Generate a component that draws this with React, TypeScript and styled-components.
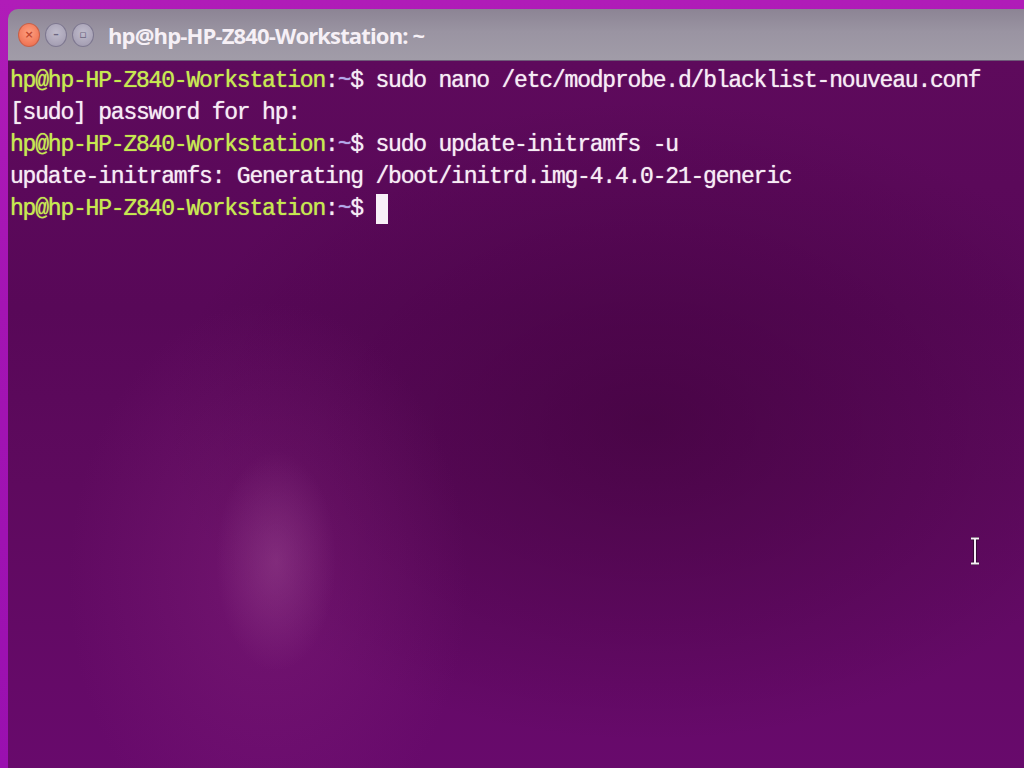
import React from 'react';
import styled, { createGlobalStyle } from 'styled-components';

const GlobalStyle = createGlobalStyle`
  html, body {
    margin: 0;
    padding: 0;
    height: 100%;
    overflow: hidden;
  }
  #root {
    height: 100%;
  }
`;

const Desktop = styled.div`
  height: 100vh;
  display: flex;
  flex-direction: column;
  padding: 9px 0 0 8px;
  box-sizing: border-box;
  background: linear-gradient(180deg, #b01cb8 0%, #a414b4 40%, #9a10b0 100%);
`;

const Window = styled.div`
  flex: 1;
  display: flex;
  flex-direction: column;
  border-top-left-radius: 10px;
  overflow: hidden;
  position: relative;
`;

const TitleBar = styled.div`
  height: 51px;
  display: flex;
  align-items: center;
  gap: 5px;
  padding-left: 10px;
  background: linear-gradient(180deg, #8c8494 0%, #9a94a2 45%, #a19ca8 100%);
  border-bottom: 1px solid #6e5a78;
`;

const WinButton = styled.span<{ $close?: boolean }>`
  width: 22px;
  height: 24px;
  border-radius: 50%;
  display: flex;
  align-items: center;
  justify-content: center;
  box-sizing: border-box;
  border: 1px solid ${p => (p.$close ? '#c86048' : '#7e7890')};
  background: ${p =>
    p.$close
      ? 'radial-gradient(circle at 50% 40%, #ffa080 0%, #f07858 70%, #d86448 100%)'
      : 'radial-gradient(circle at 50% 40%, #c0bccc 0%, #a8a2b6 70%, #948ea4 100%)'};
  color: ${p => (p.$close ? '#c04830' : '#6c6680')};
  font: 700 11px 'DejaVu Sans', sans-serif;
`;

const Title = styled.span`
  margin-left: 9px;
  font-family: 'Open Sans', 'Noto Sans', sans-serif;
  font-weight: 700;
  font-size: 22px;
  letter-spacing: -0.85px;
  color: #f6f0f6;
`;

const Terminal = styled.div`
  flex: 1;
  padding: 4px 0 0 2px;
  background:
    radial-gradient(ellipse 60px 110px at 268px 500px, rgba(160, 80, 150, 0.4), rgba(150, 60, 140, 0) 100%),
    radial-gradient(ellipse 200px 280px at 260px 520px, rgba(140, 40, 130, 0.35), rgba(120, 20, 120, 0) 100%),
    radial-gradient(ellipse 480px 320px at 640px 360px, rgba(55, 0, 50, 0.5), rgba(60, 0, 55, 0) 100%),
    linear-gradient(180deg, #5e0a5c 0%, #580858 35%, #5e0a5e 60%, #680a6c 100%);
  font-family: 'Liberation Mono', 'DejaVu Sans Mono', monospace;
  font-size: 23px;
  letter-spacing: -1.2px;
  line-height: 32px;
  color: #f6ecf4;
  text-shadow: 0 0 1px rgba(255, 240, 255, 0.8);
`;

const Line = styled.div`
  white-space: pre;
  display: flex;
  align-items: center;
`;

const Prompt = styled.span`
  color: #c6ea4e;
  text-shadow: 0 0 1px rgba(220, 255, 120, 0.8);
`;

const Tilde = styled.span`
  color: #b0a8ec;
`;

const Cursor = styled.span`
  display: inline-block;
  width: 12px;
  height: 30px;
  background: #f8f0f8;
`;

const IBeam = styled.svg`
  position: absolute;
  left: 962px;
  top: 528px;
`;

function PromptText() {
  return (
    <>
      <Prompt>hp@hp-HP-Z840-Workstation</Prompt>:<Tilde>~</Tilde>
      {'$ '}
    </>
  );
}

export default function App() {
  return (
    <>
      <GlobalStyle />
      <Desktop>
        <Window>
          <TitleBar>
            <WinButton $close>×</WinButton>
            <WinButton>–</WinButton>
            <WinButton>▫</WinButton>
            <Title>hp@hp-HP-Z840-Workstation: ~</Title>
          </TitleBar>
          <Terminal>
            <Line>
              <PromptText />
              sudo nano /etc/modprobe.d/blacklist-nouveau.conf
            </Line>
            <Line>[sudo] password for hp:</Line>
            <Line>
              <PromptText />
              sudo update-initramfs -u
            </Line>
            <Line>update-initramfs: Generating /boot/initrd.img-4.4.0-21-generic</Line>
            <Line>
              <PromptText />
              <Cursor />
            </Line>
          </Terminal>
          <IBeam width="10" height="28" viewBox="0 0 10 28">
            <path d="M1 1.5h8M5 1.5v25M1 26.5h8" stroke="#2a0a2a" strokeWidth="3.5" fill="none" />
            <path d="M1 1.5h8M5 1.5v25M1 26.5h8" stroke="#f6eef6" strokeWidth="2" fill="none" />
          </IBeam>
        </Window>
      </Desktop>
    </>
  );
}
